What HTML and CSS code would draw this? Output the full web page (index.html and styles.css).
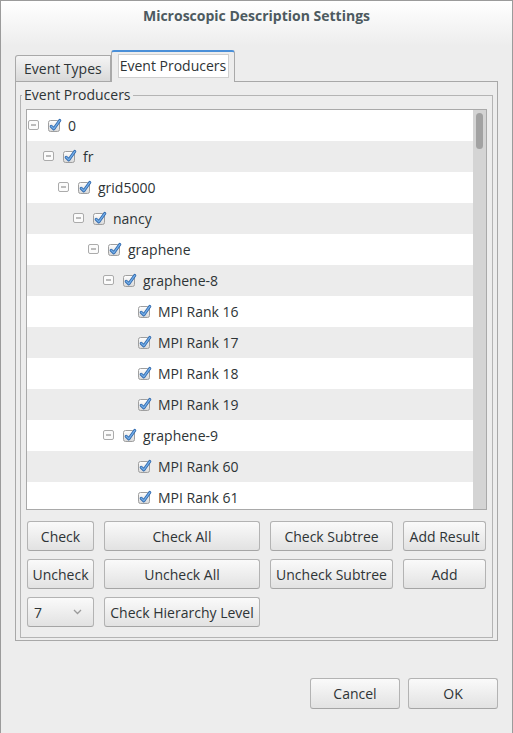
FILE: index.html
```html
<!DOCTYPE html>
<html>
<head>
<meta charset="utf-8">
<link rel="stylesheet" href="styles.css">
</head>
<body>
<div class="window">
  <div class="titlebar">Microscopic Description Settings</div>
  <div class="content">
    <div class="tabs">
      <div class="tab">Event Types</div>
      <div class="tab tab-active"><span class="tab-focus">Event Producers</span></div>
    </div>
    <div class="pane">
      <fieldset class="group">
        <legend class="group-title">Event Producers</legend>
        <div class="tree">
          <div class="rows">
            <div class="row l0"><span class="exp"><svg width="11" height="11" viewBox="0 0 11 11"><rect x="0.5" y="0.5" width="10" height="9" rx="1.5" fill="#fbfbfb" stroke="#ababab"/><line x1="3" y1="5" x2="8" y2="5" stroke="#7c7c7c"/></svg></span><span class="cb"><svg width="14" height="14" viewBox="0 0 14 14"><defs><linearGradient id="g" x1="0" y1="0" x2="0" y2="1"><stop offset="0" stop-color="#ffffff"/><stop offset="1" stop-color="#d8d8d8"/></linearGradient></defs><rect x="0.5" y="2.5" width="11" height="11" rx="2" fill="url(#g)" stroke="#9f9f9f"/><path d="M3.2 8.3 L5.8 10.8 L11.8 2.4" fill="none" stroke="#2d66ab" stroke-width="3" stroke-linecap="round" stroke-linejoin="round"/><path d="M3.2 8.3 L5.8 10.8 L11.8 2.4" fill="none" stroke="#74aee8" stroke-width="1.4" stroke-linecap="round" stroke-linejoin="round"/></svg></span><span class="label">0</span></div>
            <div class="row l1 alt"><span class="exp"><svg width="11" height="11" viewBox="0 0 11 11"><rect x="0.5" y="0.5" width="10" height="9" rx="1.5" fill="#fbfbfb" stroke="#ababab"/><line x1="3" y1="5" x2="8" y2="5" stroke="#7c7c7c"/></svg></span><span class="cb"><svg width="14" height="14" viewBox="0 0 14 14"><rect x="0.5" y="2.5" width="11" height="11" rx="2" fill="url(#g)" stroke="#9f9f9f"/><path d="M3.2 8.3 L5.8 10.8 L11.8 2.4" fill="none" stroke="#2d66ab" stroke-width="3" stroke-linecap="round" stroke-linejoin="round"/><path d="M3.2 8.3 L5.8 10.8 L11.8 2.4" fill="none" stroke="#74aee8" stroke-width="1.4" stroke-linecap="round" stroke-linejoin="round"/></svg></span><span class="label">fr</span></div>
            <div class="row l2"><span class="exp"><svg width="11" height="11" viewBox="0 0 11 11"><rect x="0.5" y="0.5" width="10" height="9" rx="1.5" fill="#fbfbfb" stroke="#ababab"/><line x1="3" y1="5" x2="8" y2="5" stroke="#7c7c7c"/></svg></span><span class="cb"><svg width="14" height="14" viewBox="0 0 14 14"><rect x="0.5" y="2.5" width="11" height="11" rx="2" fill="url(#g)" stroke="#9f9f9f"/><path d="M3.2 8.3 L5.8 10.8 L11.8 2.4" fill="none" stroke="#2d66ab" stroke-width="3" stroke-linecap="round" stroke-linejoin="round"/><path d="M3.2 8.3 L5.8 10.8 L11.8 2.4" fill="none" stroke="#74aee8" stroke-width="1.4" stroke-linecap="round" stroke-linejoin="round"/></svg></span><span class="label">grid5000</span></div>
            <div class="row l3 alt"><span class="exp"><svg width="11" height="11" viewBox="0 0 11 11"><rect x="0.5" y="0.5" width="10" height="9" rx="1.5" fill="#fbfbfb" stroke="#ababab"/><line x1="3" y1="5" x2="8" y2="5" stroke="#7c7c7c"/></svg></span><span class="cb"><svg width="14" height="14" viewBox="0 0 14 14"><rect x="0.5" y="2.5" width="11" height="11" rx="2" fill="url(#g)" stroke="#9f9f9f"/><path d="M3.2 8.3 L5.8 10.8 L11.8 2.4" fill="none" stroke="#2d66ab" stroke-width="3" stroke-linecap="round" stroke-linejoin="round"/><path d="M3.2 8.3 L5.8 10.8 L11.8 2.4" fill="none" stroke="#74aee8" stroke-width="1.4" stroke-linecap="round" stroke-linejoin="round"/></svg></span><span class="label">nancy</span></div>
            <div class="row l4"><span class="exp"><svg width="11" height="11" viewBox="0 0 11 11"><rect x="0.5" y="0.5" width="10" height="9" rx="1.5" fill="#fbfbfb" stroke="#ababab"/><line x1="3" y1="5" x2="8" y2="5" stroke="#7c7c7c"/></svg></span><span class="cb"><svg width="14" height="14" viewBox="0 0 14 14"><rect x="0.5" y="2.5" width="11" height="11" rx="2" fill="url(#g)" stroke="#9f9f9f"/><path d="M3.2 8.3 L5.8 10.8 L11.8 2.4" fill="none" stroke="#2d66ab" stroke-width="3" stroke-linecap="round" stroke-linejoin="round"/><path d="M3.2 8.3 L5.8 10.8 L11.8 2.4" fill="none" stroke="#74aee8" stroke-width="1.4" stroke-linecap="round" stroke-linejoin="round"/></svg></span><span class="label">graphene</span></div>
            <div class="row l5 alt"><span class="exp"><svg width="11" height="11" viewBox="0 0 11 11"><rect x="0.5" y="0.5" width="10" height="9" rx="1.5" fill="#fbfbfb" stroke="#ababab"/><line x1="3" y1="5" x2="8" y2="5" stroke="#7c7c7c"/></svg></span><span class="cb"><svg width="14" height="14" viewBox="0 0 14 14"><rect x="0.5" y="2.5" width="11" height="11" rx="2" fill="url(#g)" stroke="#9f9f9f"/><path d="M3.2 8.3 L5.8 10.8 L11.8 2.4" fill="none" stroke="#2d66ab" stroke-width="3" stroke-linecap="round" stroke-linejoin="round"/><path d="M3.2 8.3 L5.8 10.8 L11.8 2.4" fill="none" stroke="#74aee8" stroke-width="1.4" stroke-linecap="round" stroke-linejoin="round"/></svg></span><span class="label">graphene-8</span></div>
            <div class="row l6"><span class="exp"></span><span class="cb"><svg width="14" height="14" viewBox="0 0 14 14"><rect x="0.5" y="2.5" width="11" height="11" rx="2" fill="url(#g)" stroke="#9f9f9f"/><path d="M3.2 8.3 L5.8 10.8 L11.8 2.4" fill="none" stroke="#2d66ab" stroke-width="3" stroke-linecap="round" stroke-linejoin="round"/><path d="M3.2 8.3 L5.8 10.8 L11.8 2.4" fill="none" stroke="#74aee8" stroke-width="1.4" stroke-linecap="round" stroke-linejoin="round"/></svg></span><span class="label">MPI Rank 16</span></div>
            <div class="row l6 alt"><span class="exp"></span><span class="cb"><svg width="14" height="14" viewBox="0 0 14 14"><rect x="0.5" y="2.5" width="11" height="11" rx="2" fill="url(#g)" stroke="#9f9f9f"/><path d="M3.2 8.3 L5.8 10.8 L11.8 2.4" fill="none" stroke="#2d66ab" stroke-width="3" stroke-linecap="round" stroke-linejoin="round"/><path d="M3.2 8.3 L5.8 10.8 L11.8 2.4" fill="none" stroke="#74aee8" stroke-width="1.4" stroke-linecap="round" stroke-linejoin="round"/></svg></span><span class="label">MPI Rank 17</span></div>
            <div class="row l6"><span class="exp"></span><span class="cb"><svg width="14" height="14" viewBox="0 0 14 14"><rect x="0.5" y="2.5" width="11" height="11" rx="2" fill="url(#g)" stroke="#9f9f9f"/><path d="M3.2 8.3 L5.8 10.8 L11.8 2.4" fill="none" stroke="#2d66ab" stroke-width="3" stroke-linecap="round" stroke-linejoin="round"/><path d="M3.2 8.3 L5.8 10.8 L11.8 2.4" fill="none" stroke="#74aee8" stroke-width="1.4" stroke-linecap="round" stroke-linejoin="round"/></svg></span><span class="label">MPI Rank 18</span></div>
            <div class="row l6 alt"><span class="exp"></span><span class="cb"><svg width="14" height="14" viewBox="0 0 14 14"><rect x="0.5" y="2.5" width="11" height="11" rx="2" fill="url(#g)" stroke="#9f9f9f"/><path d="M3.2 8.3 L5.8 10.8 L11.8 2.4" fill="none" stroke="#2d66ab" stroke-width="3" stroke-linecap="round" stroke-linejoin="round"/><path d="M3.2 8.3 L5.8 10.8 L11.8 2.4" fill="none" stroke="#74aee8" stroke-width="1.4" stroke-linecap="round" stroke-linejoin="round"/></svg></span><span class="label">MPI Rank 19</span></div>
            <div class="row l5"><span class="exp"><svg width="11" height="11" viewBox="0 0 11 11"><rect x="0.5" y="0.5" width="10" height="9" rx="1.5" fill="#fbfbfb" stroke="#ababab"/><line x1="3" y1="5" x2="8" y2="5" stroke="#7c7c7c"/></svg></span><span class="cb"><svg width="14" height="14" viewBox="0 0 14 14"><rect x="0.5" y="2.5" width="11" height="11" rx="2" fill="url(#g)" stroke="#9f9f9f"/><path d="M3.2 8.3 L5.8 10.8 L11.8 2.4" fill="none" stroke="#2d66ab" stroke-width="3" stroke-linecap="round" stroke-linejoin="round"/><path d="M3.2 8.3 L5.8 10.8 L11.8 2.4" fill="none" stroke="#74aee8" stroke-width="1.4" stroke-linecap="round" stroke-linejoin="round"/></svg></span><span class="label">graphene-9</span></div>
            <div class="row l6 alt"><span class="exp"></span><span class="cb"><svg width="14" height="14" viewBox="0 0 14 14"><rect x="0.5" y="2.5" width="11" height="11" rx="2" fill="url(#g)" stroke="#9f9f9f"/><path d="M3.2 8.3 L5.8 10.8 L11.8 2.4" fill="none" stroke="#2d66ab" stroke-width="3" stroke-linecap="round" stroke-linejoin="round"/><path d="M3.2 8.3 L5.8 10.8 L11.8 2.4" fill="none" stroke="#74aee8" stroke-width="1.4" stroke-linecap="round" stroke-linejoin="round"/></svg></span><span class="label">MPI Rank 60</span></div>
            <div class="row l6"><span class="exp"></span><span class="cb"><svg width="14" height="14" viewBox="0 0 14 14"><rect x="0.5" y="2.5" width="11" height="11" rx="2" fill="url(#g)" stroke="#9f9f9f"/><path d="M3.2 8.3 L5.8 10.8 L11.8 2.4" fill="none" stroke="#2d66ab" stroke-width="3" stroke-linecap="round" stroke-linejoin="round"/><path d="M3.2 8.3 L5.8 10.8 L11.8 2.4" fill="none" stroke="#74aee8" stroke-width="1.4" stroke-linecap="round" stroke-linejoin="round"/></svg></span><span class="label">MPI Rank 61</span></div>
            <div class="row l6 alt"><span class="exp"></span><span class="cb"><svg width="14" height="14" viewBox="0 0 14 14"><rect x="0.5" y="2.5" width="11" height="11" rx="2" fill="url(#g)" stroke="#9f9f9f"/><path d="M3.2 8.3 L5.8 10.8 L11.8 2.4" fill="none" stroke="#2d66ab" stroke-width="3" stroke-linecap="round" stroke-linejoin="round"/><path d="M3.2 8.3 L5.8 10.8 L11.8 2.4" fill="none" stroke="#74aee8" stroke-width="1.4" stroke-linecap="round" stroke-linejoin="round"/></svg></span><span class="label">MPI Rank 62</span></div>
          </div>
          <div class="scrollbar"><div class="thumb"></div></div>
        </div>
        <div class="buttons">
          <button class="btn">Check</button>
          <button class="btn">Check All</button>
          <button class="btn">Check Subtree</button>
          <button class="btn">Add Result</button>
          <button class="btn">Uncheck</button>
          <button class="btn">Uncheck All</button>
          <button class="btn">Uncheck Subtree</button>
          <button class="btn">Add</button>
          <div class="btn combo"><span>7</span><svg width="9" height="6" viewBox="0 0 9 6"><path d="M1 1 L4.5 4.5 L8 1" fill="none" stroke="#9a9a9a" stroke-width="1.3"/></svg></div>
          <button class="btn">Check Hierarchy Level</button>
        </div>
      </fieldset>
    </div>
  </div>
  <div class="footer">
    <button class="btn wide">Cancel</button>
    <button class="btn wide">OK</button>
  </div>
</div>
</body>
</html>
```

FILE: styles.css
```css
html, body {
  margin: 0;
  padding: 0;
  background: #ededed;
}
body {
  font-family: "Open Sans", "DejaVu Sans", sans-serif;
  font-size: 14px;
  color: #2e3436;
}
.window {
  width: 513px;
  height: 733px;
  box-sizing: border-box;
  border: 1px solid #9b9b9b;
  border-bottom: none;
  background: linear-gradient(#ffffff 0, #ededed 45px, #ededed 100%);
  display: flex;
  flex-direction: column;
}
.titlebar {
  height: 49px;
  box-sizing: border-box;
  padding-top: 5px;
  line-height: 20px;
  text-align: center;
  font-weight: bold;
  font-size: 14px;
  color: #4d5a60;
}
.content {
  padding: 0 14px;
}
.tabs {
  display: flex;
  align-items: flex-end;
  height: 31px;
  position: relative;
  z-index: 1;
}
.tab {
  height: 26px;
  box-sizing: border-box;
  border: 1px solid #a9a9a9;
  border-bottom: none;
  border-top-left-radius: 3px;
  padding: 0 8px;
  line-height: 25px;
  background: linear-gradient(#f5f5f5, #d9d9d9);
  color: #2e3436;
}
.tab-active {
  height: 32px;
  margin-bottom: -1px;
  border-top: 2px solid #4a8fd8;
  border-radius: 3px 3px 0 0;
  padding: 2px 5px 0 6px;
  background: #ededed;
}
.tab-focus {
  display: block;
  height: 24px;
  box-sizing: border-box;
  background: #ffffff;
  border: 1px solid #cfcfcf;
  padding: 0 2px 0 1px;
  line-height: 22px;
}
.pane {
  border: 1px solid #a8a8a8;
  padding: 4px 4px 2px 4px;
  background: #ededed;
}
.group {
  margin: 0;
  border: 1px solid #b4b4b4;
  padding: 5px 5px 10px 5px;
}
.group-title {
  margin-left: -4px;
  padding: 0 2px;
  line-height: 18px;
}
.tree {
  display: flex;
  height: 401px;
  box-sizing: border-box;
  border: 1px solid #a9a9a9;
  background: #ffffff;
}
.rows {
  flex: 1;
  overflow: hidden;
}
.row {
  height: 31px;
  display: flex;
  align-items: center;
  white-space: nowrap;
}
.row.alt {
  background: #ececec;
}
.l0 { padding-left: 1px; }
.l1 { padding-left: 16px; }
.l2 { padding-left: 31px; }
.l3 { padding-left: 46px; }
.l4 { padding-left: 61px; }
.l5 { padding-left: 76px; }
.l6 { padding-left: 91px; }
.exp {
  width: 20px;
  height: 11px;
  display: flex;
}
.cb {
  width: 14px;
  height: 14px;
  margin-right: 6px;
  margin-top: -2px;
  display: flex;
}
.label {
  line-height: 20px;
}
.scrollbar {
  width: 13px;
  background: #d4d4d4;
  padding: 3px 3px 0 3px;
  box-sizing: border-box;
}
.thumb {
  width: 7px;
  height: 36px;
  border-radius: 4px;
  background: #a2a2a2;
}
.buttons {
  display: grid;
  grid-template-columns: 67px 156px 123px 83px;
  grid-auto-rows: 30px;
  column-gap: 10px;
  row-gap: 8px;
  margin-top: 11px;
  padding-left: 1px;
}
.btn {
  font-family: "Open Sans", "DejaVu Sans", sans-serif;
  font-size: 14px;
  color: #2e3436;
  border: 1px solid #b3b3b3;
  border-bottom-color: #a5a5a5;
  border-radius: 3px;
  background: linear-gradient(#fafafa, #e2e2e2);
  padding: 0;
  margin: 0;
  box-sizing: border-box;
  white-space: nowrap;
}
.combo {
  display: flex;
  align-items: center;
  justify-content: space-between;
  padding: 0 11px 0 6px;
}
.footer {
  display: flex;
  justify-content: flex-end;
  gap: 8px;
  padding: 37px 14px 0 0;
}
.wide {
  width: 90px;
  height: 31px;
}
```
